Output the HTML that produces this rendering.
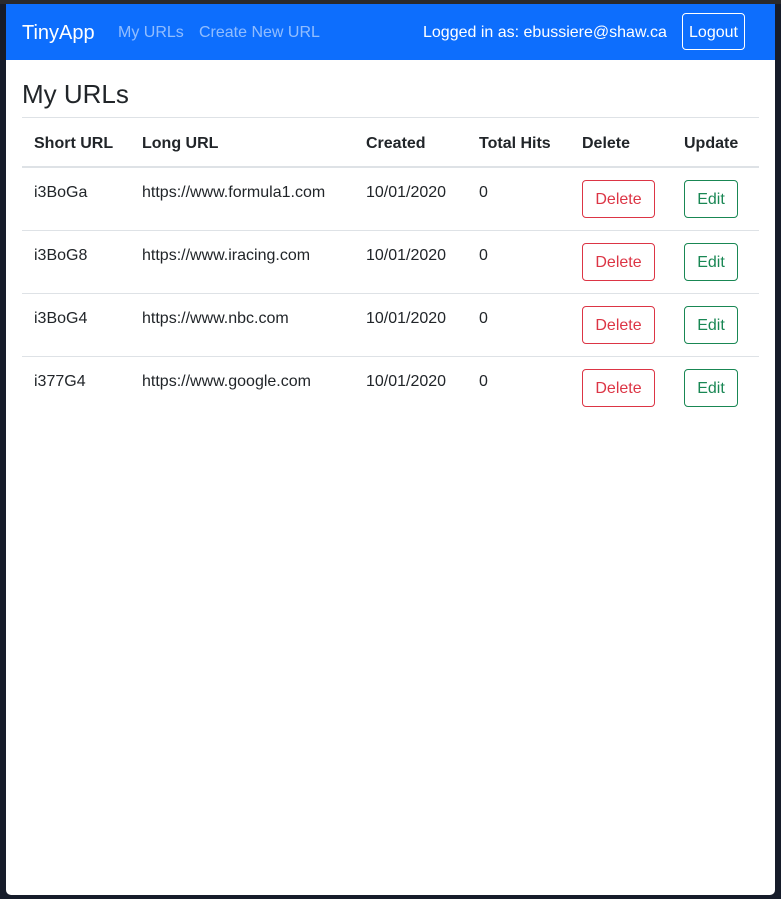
<!DOCTYPE html>
<html><head><style>
body{margin:0;width:781px;height:899px;background:#161c2a;font-family:"Liberation Sans",sans-serif;position:relative;overflow:hidden}
.top{position:absolute;left:0;top:0;width:781px;height:4px;background:#2a2a2c}
.win{position:absolute;left:6px;top:4px;width:769px;height:891px;background:#fff;border-radius:0 0 5px 5px;overflow:hidden}
.nav{position:absolute;left:0;top:0;width:769px;height:56px;background:#0d6efd}
.nav span{position:absolute;top:20px;font-size:16px;color:rgba(255,255,255,.55)}
.brand{color:#fff!important;font-size:20px!important;top:18px!important}
.logout{position:absolute;left:676px;top:9px;width:61px;height:35px;border:1px solid #fff;border-radius:4px;color:#fff;font-size:16px;text-align:center;line-height:37px}
h1{position:absolute;left:16px;top:75px;margin:0;font-size:26px;font-weight:500;color:#212529}
.c{position:absolute}
.hr{position:absolute;left:16px;width:737px;height:1px;background:#dee2e6}
.btn{position:absolute;height:38px;border:1px solid;border-radius:4px;text-align:center;line-height:38px;font-size:16px;box-sizing:border-box}
.d{border-color:#dc3545;color:#dc3545;width:73px;left:576px}
.e{border-color:#198754;color:#198754;width:54px;left:678px}
</style></head><body>
<div class="top"></div>
<div class="win">
<div class="nav">
<span class="brand" style="left:16px">TinyApp</span>
<span style="left:112px">My URLs</span>
<span style="left:193px">Create New URL</span>
<span style="left:417px;color:#fff">Logged in as: ebussiere@shaw.ca</span>
<div class="logout">Logout</div>
</div>
<h1>My URLs</h1>
<div class="hr" style="top:113px"></div>
<div class="hr" style="top:162px;height:2px"></div>
<div class="hr" style="top:226px"></div>
<div class="hr" style="top:289px"></div>
<div class="hr" style="top:352px"></div>
<div style="font-weight:bold;font-size:16px;color:#212529">
<span class="c" style="left:28px;top:131px">Short URL</span>
<span class="c" style="left:136px;top:131px">Long URL</span>
<span class="c" style="left:360px;top:131px">Created</span>
<span class="c" style="left:473px;top:131px">Total Hits</span>
<span class="c" style="left:576px;top:131px">Delete</span>
<span class="c" style="left:678px;top:131px">Update</span>
</div>
<div style="font-size:16px;color:#212529">
<span class="c" style="left:28px;top:180px">i3BoGa</span><span class="c" style="left:136px;top:180px">https://www.formula1.com</span><span class="c" style="left:360px;top:180px">10/01/2020</span><span class="c" style="left:473px;top:180px">0</span>
<span class="c" style="left:28px;top:243px">i3BoG8</span><span class="c" style="left:136px;top:243px">https://www.iracing.com</span><span class="c" style="left:360px;top:243px">10/01/2020</span><span class="c" style="left:473px;top:243px">0</span>
<span class="c" style="left:28px;top:306px">i3BoG4</span><span class="c" style="left:136px;top:306px">https://www.nbc.com</span><span class="c" style="left:360px;top:306px">10/01/2020</span><span class="c" style="left:473px;top:306px">0</span>
<span class="c" style="left:28px;top:369px">i377G4</span><span class="c" style="left:136px;top:369px">https://www.google.com</span><span class="c" style="left:360px;top:369px">10/01/2020</span><span class="c" style="left:473px;top:369px">0</span>
</div>
<div class="btn d" style="top:176px">Delete</div><div class="btn e" style="top:176px">Edit</div>
<div class="btn d" style="top:239px">Delete</div><div class="btn e" style="top:239px">Edit</div>
<div class="btn d" style="top:302px">Delete</div><div class="btn e" style="top:302px">Edit</div>
<div class="btn d" style="top:365px">Delete</div><div class="btn e" style="top:365px">Edit</div>
</div>
</body></html>
